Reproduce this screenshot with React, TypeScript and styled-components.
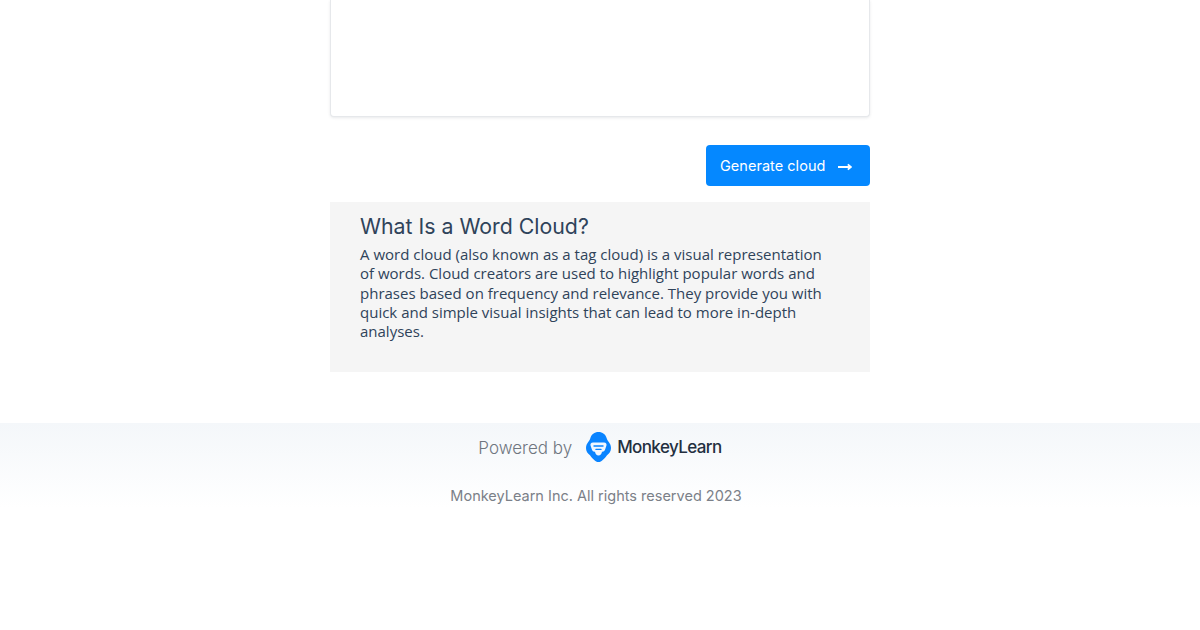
import React, { FC } from 'react';
import styled, { createGlobalStyle } from 'styled-components';

const GlobalStyle = createGlobalStyle`
  html, body {
    margin: 0;
    padding: 0;
    background-color: #fff;
  }
`;

const Page = styled.div`
  width: 1200px;
  height: 630px;
  overflow: hidden;
  display: flex;
  flex-direction: column;
  align-items: center;
`;

const Column = styled.main`
  width: 540px;
  display: flex;
  flex-direction: column;
`;

const TextCard = styled.div`
  height: 117px;
  box-sizing: border-box;
  background-color: #fff;
  border: 1px solid #e6e8eb;
  border-top: none;
  border-radius: 0 0 4px 4px;
  box-shadow: 0 1px 3px rgba(30, 40, 60, 0.1);
`;

const Actions = styled.div`
  display: flex;
  justify-content: flex-end;
  margin-top: 28px;
`;

const GenerateButton = styled.button`
  width: 164px;
  height: 41px;
  padding: 0 0 0 14px;
  display: flex;
  align-items: center;
  border: none;
  border-radius: 4px;
  background-color: #0588ff;
  color: #fff;
  font-family: Inter, "Liberation Sans", sans-serif;
  font-size: 14.5px;
  font-weight: 400;
  letter-spacing: 0.03px;
`;

const ArrowIcon = styled.svg`
  margin-left: 13px;
  margin-top: 2px;
`;

const Explainer = styled.section`
  margin-top: 16px;
  height: 170px;
  box-sizing: border-box;
  padding: 10px 40px 0 30px;
  background-color: #f5f5f5;
  color: #2f435a;
`;

const Heading = styled.h2`
  margin: 0 0 5px;
  font-family: Inter, "Liberation Sans", sans-serif;
  font-size: 21.3px;
  font-weight: 400;
  line-height: 28px;
`;

const Paragraph = styled.p`
  margin: 0;
  font-family: "Open Sans", "Liberation Sans", sans-serif;
  font-size: 15px;
  line-height: 19.3px;
`;

const Footer = styled.footer`
  align-self: stretch;
  margin-top: 51px;
  padding-top: 8px;
  height: 199px;
  box-sizing: border-box;
  background: linear-gradient(180deg, #f4f7fa 0, #ffffff 85px);
  display: flex;
  flex-direction: column;
  align-items: center;
`;

const PoweredRow = styled.div`
  display: flex;
  align-items: center;
  height: 32px;
`;

const PoweredLabel = styled.span`
  margin: 2px 14px 0 0;
  font-family: Inter, "Liberation Sans", sans-serif;
  font-size: 17px;
  font-weight: 300;
  color: #6f7680;
`;

const Brand = styled.span`
  font-family: Inter, "Liberation Sans", sans-serif;
  font-size: 17px;
  font-weight: 500;
  letter-spacing: -0.6px;
  color: #232f3f;
  margin-left: 6px;
`;

const Copyright = styled.div`
  margin-top: 24px;
  margin-right: 8px;
  font-family: Inter, "Liberation Sans", sans-serif;
  font-size: 14.5px;
  line-height: 18px;
  color: #7b8088;
`;

const MonkeyLogo: FC = () => (
  <svg width='25' height='30' viewBox='0 0 25 30'>
    <path d='M12.5 0C16.6 0 19.6 2.4 20.6 6C21 7.4 21.6 8.4 22.8 10C24.2 11.8 25 13.8 25 16C25 19.2 23.4 21.6 21 23.2C18.6 26.4 15.6 30 12.5 30C9.4 30 6.4 26.4 4 23.2C1.6 21.6 0 19.2 0 16C0 13.8 0.8 11.8 2.2 10C3.4 8.4 4 7.4 4.4 6C5.4 2.4 8.4 0 12.5 0Z' fill='#0a84ff' />
    <path d='M7 10.5H18C20 10.5 21 12 20.4 13.8L19 17.8C18.6 19 17.6 19.8 16.4 19.8H16C15.7 22 14.3 23.6 12.5 23.6C10.7 23.6 9.3 22 9 19.8H8.6C7.4 19.8 6.4 19 6 17.8L4.6 13.8C4 12 5 10.5 7 10.5Z' fill='#f0f7ff' />
    <path d='M8 14H17M10 17.4H15' stroke='#0a84ff' strokeWidth='1.4' strokeLinecap='round' />
  </svg>
);

const App: FC = () => (
  <Page>
    <GlobalStyle />
    <Column>
      <TextCard />
      <Actions>
        <GenerateButton>
          Generate cloud
          <ArrowIcon width='14' height='10' viewBox='0 0 14 10'>
            <path d='M0 5H12.5M9.8 2.4L13 5L9.8 7.6' fill='none' stroke='#fff' strokeWidth='1.8' />
          </ArrowIcon>
        </GenerateButton>
      </Actions>
      <Explainer>
        <Heading>What Is a Word Cloud?</Heading>
        <Paragraph>
          A word cloud (also known as a tag cloud) is a visual representation of words. Cloud creators are used to highlight popular words and phrases based on frequency and relevance. They provide you with quick and simple visual insights that can lead to more in-depth analyses.
        </Paragraph>
      </Explainer>
    </Column>
    <Footer>
      <PoweredRow>
        <PoweredLabel>Powered by</PoweredLabel>
        <MonkeyLogo />
        <Brand>MonkeyLearn</Brand>
      </PoweredRow>
      <Copyright>MonkeyLearn Inc. All rights reserved 2023</Copyright>
    </Footer>
  </Page>
);

export default App;
